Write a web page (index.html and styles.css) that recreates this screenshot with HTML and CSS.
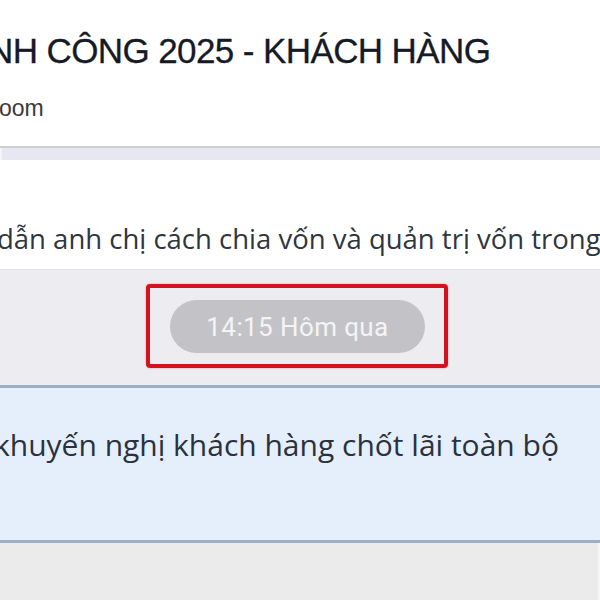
FILE: index.html
```html
<!DOCTYPE html>
<html lang="vi">
<head>
<meta charset="utf-8">
<title>Tin nhắn</title>
<link rel="stylesheet" href="styles.css">
</head>
<body>
<div class="page">
  <header class="head">
    <h1 class="title">NH CÔNG 2025 - KHÁCH HÀNG</h1>
    <div class="sub">oom</div>
  </header>
  <div class="band"></div>
  <section class="card">
    <p class="card-text">dẫn anh chị cách chia vốn và quản trị vốn trong</p>
  </section>
  <div class="stamp-row">
    <div class="highlight">
      <span class="pill">14:15 Hôm qua</span>
    </div>
  </div>
  <section class="msg">
    <p class="msg-text">khuyến nghị khách hàng chốt lãi toàn bộ</p>
  </section>
  <div class="foot"></div>
</div>
</body>
</html>
```
FILE: styles.css
```css
* { box-sizing: border-box; }
html, body { margin: 0; padding: 0; }
body {
  width: 600px;
  height: 600px;
  overflow: hidden;
  background: #ebebeb;
  font-family: "Liberation Sans", Arial, sans-serif;
}
.page {
  display: flex;
  flex-direction: column;
  width: 600px;
  height: 600px;
  overflow: hidden;
}
.head {
  height: 148px;
  background: #ffffff;
  border-bottom: 2px solid #cdcdd2;
  padding-top: 31px;
  overflow: hidden;
  white-space: nowrap;
}
.title {
  margin: 0 0 0 -12px;
  font-size: 35px;
  line-height: 40px;
  font-weight: 400;
  letter-spacing: -0.6px;
  color: #161a26;
  -webkit-text-stroke: 0.3px #161a26;
}
.sub {
  margin-top: 23px;
  font-size: 23px;
  line-height: 28px;
  color: #3a3a3e;
  margin-left: -1px;
}
.band {
  height: 12px;
  background: #e7e7f1;
  border-left: 2px solid #f4f4f8;
}
.card {
  height: 110px;
  background: #ffffff;
  border-bottom: 1px solid #e2e2e6;
  padding-top: 61px;
  overflow: hidden;
  white-space: nowrap;
}
.card-text {
  margin: 0 0 0 -3px;
  font-family: "Open Sans", "Noto Sans", sans-serif;
  font-size: 27.5px;
  line-height: 36px;
  color: #2f3640;
}
.stamp-row {
  height: 115px;
  background: #ededf1;
  display: flex;
  justify-content: center;
  align-items: flex-start;
  padding-top: 14px;
  padding-right: 6px;
}
.highlight {
  width: 302px;
  height: 84px;
  border: 4px solid #d4121f;
  border-radius: 4px;
  padding: 12px 0 0 20px;
  box-shadow: 0 0 2px rgba(230, 60, 70, 0.5);
}
.pill {
  display: flex;
  align-items: center;
  justify-content: center;
  width: 255px;
  height: 53px;
  border-radius: 27px;
  background: #c3c3c7;
  color: #f4f4f6;
  font-family: Roboto, "Liberation Sans", sans-serif;
  font-size: 26px;
  letter-spacing: 0.4px;
}
.msg {
  height: 158px;
  background: #e5effc;
  border-top: 3px solid #9eaec7;
  border-bottom: 3px solid #9eaec7;
  padding-top: 37px;
  overflow: hidden;
  white-space: nowrap;
}
.msg-text {
  margin: 0 0 0 -6px;
  font-family: "Open Sans", "Noto Sans", sans-serif;
  font-size: 30px;
  line-height: 40px;
  color: #2b323d;
}
.foot {
  flex: 1;
  background: #ebebeb;
  border-right: 2px solid #f6f6f6;
}
```
